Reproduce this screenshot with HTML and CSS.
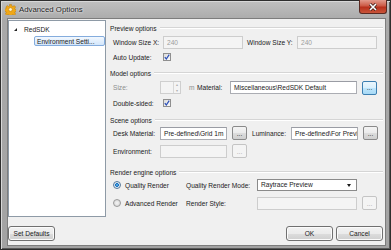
FILE: index.html
```html
<!DOCTYPE html>
<html lang="en">
<head>
    <meta charset="UTF-8">
    <title>Advanced Options</title>
    <link rel="stylesheet" href="styles.css">
</head>
<body>
    <div class="window">
        <div class="titlebar">
            <svg class="app_icon" width="11" height="11" viewBox="0 0 22 22">
                <path d="M9 1h4l.6 3 2.4 1 2.5-1.8 2.8 2.8L19.5 8.5l1 2.4 3 .6v-1 4l-3 .6-1 2.4 1.8 2.5-2.8 2.8-2.5-1.8-2.4 1-.6 3H9l-.6-3-2.4-1-2.5 1.8-2.8-2.8 1.8-2.5-1-2.4-3-.6v-4l3-.6 1-2.4L1.7 5.9 4.5 3.1 7 4.9 9.4 4z" fill="#f0a818" stroke="#b8760a" stroke-width="1"/>
                <circle cx="11" cy="11" r="3.6" fill="#fff4cf" stroke="#b8760a" stroke-width="1"/>
            </svg>
            <span class="title">Advanced Options</span>
            <div class="close">
                <svg width="10" height="8" viewBox="0 0 10 8">
                    <path d="M2 1l6 6M8 1L2 7" stroke="#3a1a14" stroke-width="3"/>
                    <path d="M2 1l6 6M8 1L2 7" stroke="#fff" stroke-width="1.6"/>
                </svg>
            </div>
        </div>
        <div class="client">
            <div class="main">
                <div class="tree">
                    <div class="tree_node"><span class="arrow"></span>RedSDK</div>
                    <div class="tree_child"><span class="selected">Environment Setti...</span></div>
                </div>
                <div class="options">
                    <div class="group_title g_preview"><span>Preview options</span></div>
                    <div class="row r_win">
                        <label class="w50">Window Size X:</label>
                        <div class="field disabled w80">240</div>
                        <label class="w50 ml4">Window Size Y:</label>
                        <div class="field disabled w80">240</div>
                    </div>
                    <div class="row r_auto">
                        <label class="w50">Auto Update:</label>
                        <span class="check"><svg width="6" height="6" viewBox="0 0 6 6"><path d="M0.8 3.2l1.5 1.8L5.2 0.6" fill="none" stroke="#2a4fb8" stroke-width="1.2"/></svg></span>
                    </div>

                    <div class="group_title g_model"><span>Model options</span></div>
                    <div class="row r_size">
                        <label class="w47 grey">Size:</label>
                        <div class="spin">
                            <div class="spin_text"></div>
                            <div class="spin_btns"><span>&#9652;</span><span>&#9662;</span></div>
                        </div>
                        <label class="unit grey">m</label>
                        <label class="w33">Material:</label>
                        <div class="field w127">Miscellaneous\RedSDK Default</div>
                        <button class="dots focus">...</button>
                    </div>
                    <div class="row r_double">
                        <label class="w50">Double-sided:</label>
                        <span class="check"><svg width="6" height="6" viewBox="0 0 6 6"><path d="M0.8 3.2l1.5 1.8L5.2 0.6" fill="none" stroke="#2a4fb8" stroke-width="1.2"/></svg></span>
                    </div>

                    <div class="group_title g_scene"><span>Scene options</span></div>
                    <div class="row r_desk">
                        <label class="w47">Desk Material:</label>
                        <div class="field w67">Pre-defined\Grid 1m</div>
                        <button class="dots">...</button>
                        <label class="w39 ml5">Luminance:</label>
                        <div class="field w67">Pre-defined\For Previ</div>
                        <button class="dots">...</button>
                    </div>
                    <div class="row r_env">
                        <label class="w47">Environment:</label>
                        <div class="field disabled w67"></div>
                        <button class="dots off">...</button>
                    </div>

                    <div class="group_title g_render"><span>Render engine options</span></div>
                    <div class="row r_quality">
                        <span class="radio on"></span>
                        <label class="w61">Quality Render</label>
                        <label class="w71">Quality Render Mode:</label>
                        <div class="combo">Raytrace Preview<span class="caret"></span></div>
                    </div>
                    <div class="row r_adv">
                        <span class="radio"></span>
                        <label class="w61">Advanced Render</label>
                        <label class="w71">Render Style:</label>
                        <div class="field disabled w100"></div>
                        <button class="dots off">...</button>
                    </div>
                </div>
            </div>
            <div class="footer">
                <button class="btn">Set Defaults</button>
                <div class="spacer"></div>
                <button class="btn">OK</button>
                <button class="btn">Cancel</button>
            </div>
        </div>
    </div>
</body>
</html>
```

FILE: styles.css
```css
html, body {
    margin: 0;
    padding: 0;
    background: #a9a9a9;
}
body {
    font-family: "Liberation Sans", Arial, sans-serif;
    font-size: 6.6px;
    color: #1a1a1a;
}
.window {
    width: 391px;
    height: 250px;
    box-sizing: border-box;
    display: flex;
    flex-direction: column;
    border: 1px solid #2e2e2e;
    background: linear-gradient(#c0c0c0, #a9a9a9 20px, #a3a3a3);
    box-shadow: inset 1px 1px 0 #d8d8d8, inset -1px -1px 0 #5a5a5a;
}
.titlebar {
    height: 17px;
    display: flex;
    align-items: center;
    position: relative;
}
.app_icon {
    margin-left: 4px;
    margin-top: -1px;
}
.title {
    margin-left: 3px;
    margin-top: -1px;
    font-size: 7.8px;
    color: #1c1c1c;
    text-shadow: 0 0 3px #e8e8e8, 0 0 2px #f0f0f0;
}
.close {
    position: absolute;
    top: -1px;
    right: 3px;
    width: 28px;
    height: 14px;
    box-sizing: border-box;
    border: 1px solid #5a2a22;
    border-top: 0;
    border-radius: 0 0 3px 3px;
    background: linear-gradient(#e29a8c, #cc5a46 45%, #b8301c 55%, #c9553a);
    display: flex;
    justify-content: center;
    align-items: center;
}
.client {
    flex: 1;
    margin: 0 4px 3px 6px;
    border: 1px solid #7d7d7d;
    background: #f0f0f0;
    display: flex;
    flex-direction: column;
    padding-top: 1px;
}
.main {
    height: 197px;
    display: flex;
}
.tree {
    width: 98px;
    box-sizing: border-box;
    border: 1px solid #8e9aa6;
    background: #fff;
    padding-top: 3px;
}
.tree_node {
    height: 10px;
    display: flex;
    align-items: center;
    padding-left: 5px;
}
.arrow {
    width: 0;
    height: 0;
    border-left: 3px solid transparent;
    border-bottom: 3px solid #262626;
    margin-right: 7px;
    margin-top: 1px;
}
.tree_child {
    padding-left: 25px;
    margin-top: 2px;
}
.selected {
    display: block;
    height: 10px;
    line-height: 9px;
    box-sizing: border-box;
    padding-left: 2px;
    border: 1px solid #84acdd;
    border-radius: 2px;
    background: linear-gradient(#f2f8fe, #d3e6fb);
}
.options {
    flex: 1;
    margin-left: 4px;
    margin-right: 2px;
}
.group_title {
    height: 10px;
    display: flex;
    align-items: center;
}
.group_title::after {
    content: "";
    flex: 1;
    margin-left: 3px;
    border-top: 1px solid #d5d5d5;
    border-bottom: 1px solid #fff;
}
.g_preview { margin-top: 3px; }
.g_model { margin-top: 4px; }
.g_scene { margin-top: 5px; }
.g_render { margin-top: 9px; }
.row {
    height: 14px;
    display: flex;
    align-items: center;
    padding-left: 3px;
}
.r_win { margin-top: 2px; }
.r_auto { margin-top: 1px; }
.r_size { margin-top: 2px; height: 15px; }
.r_double { margin-top: 1px; }
.r_desk { margin-top: 1px; }
.r_env { margin-top: 4px; }
.r_quality { margin-top: 1px; padding-left: 3px; }
.r_adv { margin-top: 4px; padding-left: 3px; }
label {
    flex: none;
    white-space: nowrap;
}
.grey { color: #8d8d8d; }
.w33 { width: 33px; }
.w39 { width: 39px; }
.w47 { width: 47px; }
.w50 { width: 50px; }
.w61 { width: 61px; }
.w71 { width: 71px; }
.w67 { width: 67px; }
.w80 { width: 80px; }
.w100 { width: 100px; }
.w127 { width: 127px; }
.ml4 { margin-left: 4px; }
.ml5 { margin-left: 5px; }
.field {
    flex: none;
    height: 13px;
    box-sizing: border-box;
    border: 1px solid #abadb3;
    border-top-color: #9a9ca4;
    background: #fff;
    padding-left: 3px;
    line-height: 11px;
    white-space: nowrap;
    overflow: hidden;
}
.field.disabled {
    background: #f4f4f4;
    border-color: #cdcdcd;
    color: #9c9c9c;
}
.check {
    width: 8px;
    height: 8px;
    box-sizing: border-box;
    border: 1px solid #8f8f8f;
    background: linear-gradient(135deg, #dcdcdc, #fafafa);
    display: flex;
    justify-content: center;
    align-items: center;
}
.spin {
    width: 21px;
    height: 13px;
    box-sizing: border-box;
    border: 1px solid #cfcfcf;
    background: #f4f4f4;
    display: flex;
}
.spin_text { flex: 1; }
.spin_btns {
    width: 6px;
    display: flex;
    flex-direction: column;
    border-left: 1px solid #d8d8d8;
}
.spin_btns span {
    flex: 1;
    font-size: 4px;
    line-height: 5px;
    color: #b0b0b0;
    text-align: center;
}
.unit {
    margin-left: 8px;
    width: 8px;
}
button {
    font-family: inherit;
    font-size: 6.6px;
    color: #1a1a1a;
    padding: 0;
}
.dots {
    flex: none;
    width: 15px;
    height: 14px;
    margin-left: 5px;
    border: 1px solid #8a8a8a;
    border-radius: 2px;
    background: linear-gradient(#f4f4f4, #ebebeb 50%, #dddddd 51%, #cfcfcf);
    line-height: 9px;
}
.dots.focus {
    border-color: #3c7fb1;
    background: linear-gradient(#eaf6fd, #d9f0fc 50%, #bee6fd 51%, #a7d9f5);
}
.dots.off {
    border-color: #c4c4c4;
    background: #f4f4f4;
    color: #a8a8a8;
}
.radio {
    width: 8px;
    height: 8px;
    box-sizing: border-box;
    border-radius: 50%;
    border: 1px solid #9a9a9a;
    background: radial-gradient(#f4f4f4, #d2d2d2);
    margin-right: 4px;
}
.radio.on {
    border-color: #5a7a9a;
    background: radial-gradient(#6fc6f4 0, #1b72c2 1.6px, #e4eef7 2.2px, #d0dce8);
}
.combo {
    width: 100px;
    height: 12px;
    box-sizing: border-box;
    border: 1px solid #8a8a8a;
    background: #fff;
    padding-left: 3px;
    line-height: 10px;
    display: flex;
    align-items: center;
    justify-content: space-between;
}
.caret {
    width: 0;
    height: 0;
    border-left: 2.5px solid transparent;
    border-right: 2.5px solid transparent;
    border-top: 3px solid #1a1a1a;
    margin-right: 5px;
}
.footer {
    display: flex;
    margin-top: 9px;
    padding-right: 2px;
}
.spacer { flex: 1; }
.btn {
    width: 47px;
    height: 15px;
    margin-left: 3px;
    border: 1px solid #707070;
    border-radius: 3px;
    background: linear-gradient(#f2f2f2, #ebebeb 50%, #dddddd 51%, #cfcfcf);
    box-shadow: inset 0 0 0 1px #fbfbfb;
}
.footer .btn:first-child { margin-left: 0; }
```
